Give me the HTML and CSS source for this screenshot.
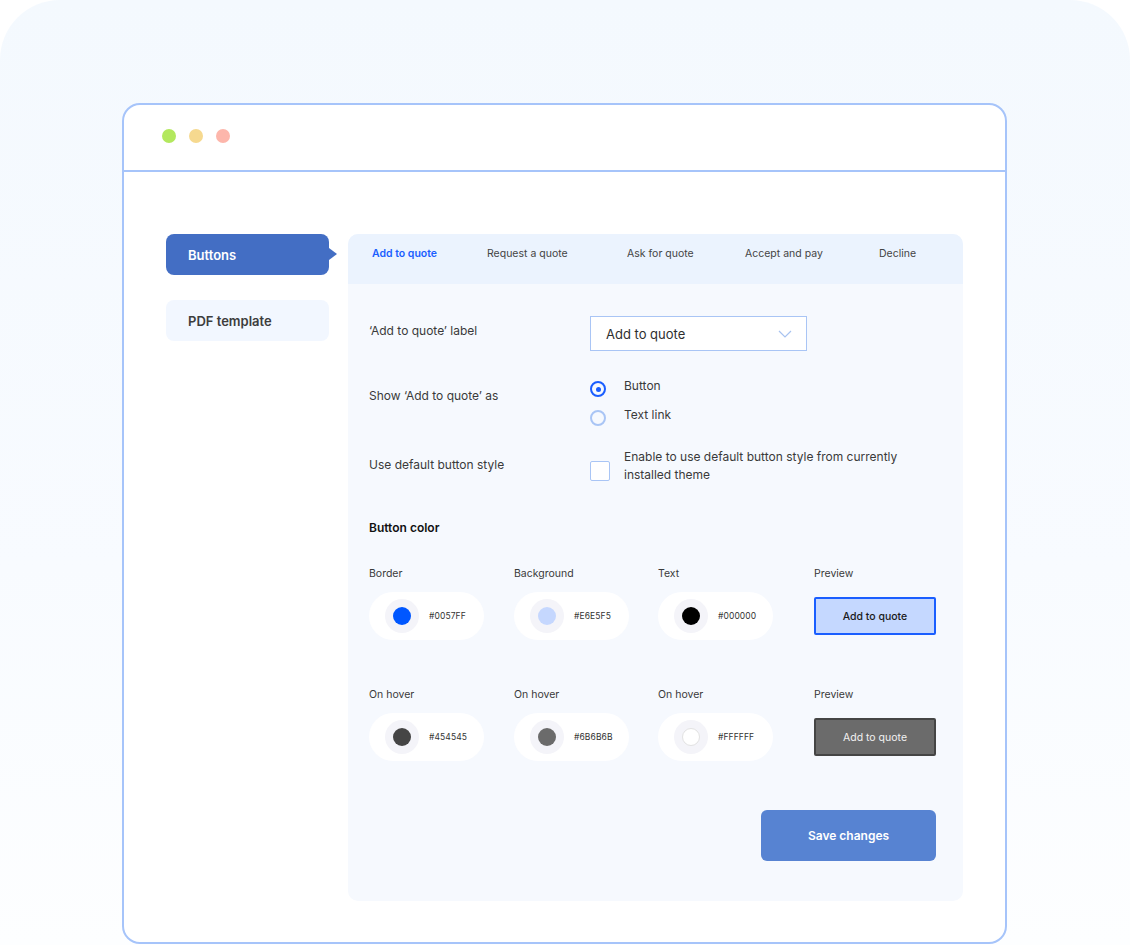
FILE: index.html
```html
<!DOCTYPE html>
<html>
<head>
<meta charset="utf-8">
<link rel="stylesheet" href="styles.css">
</head>
<body>
<div class="stage">
  <div class="window">
    <div class="titlebar">
      <span class="dot dot-green"></span>
      <span class="dot dot-yellow"></span>
      <span class="dot dot-red"></span>
    </div>
    <div class="content">
      <nav class="sidebar">
        <div class="side-item active">Buttons</div>
        <div class="side-item">PDF template</div>
      </nav>
      <section class="panel">
        <div class="tabs">
          <span class="tab active">Add to quote</span>
          <span class="tab">Request a quote</span>
          <span class="tab">Ask for quote</span>
          <span class="tab">Accept and pay</span>
          <span class="tab">Decline</span>
        </div>
        <div class="form">
          <div class="row row-select">
            <div class="label">‘Add to quote’ label</div>
            <div class="select">
              <span>Add to quote</span>
              <svg class="chev" width="14" height="8" viewBox="0 0 14 8"><path d="M1 1l6 6 6-6" fill="none" stroke="#a8c3f0" stroke-width="1.2"/></svg>
            </div>
          </div>
          <div class="row row-radio">
            <div class="label">Show ‘Add to quote’ as</div>
            <div class="radios">
              <div class="radio-opt"><span class="radio checked"></span><span>Button</span></div>
              <div class="radio-opt"><span class="radio"></span><span>Text link</span></div>
            </div>
          </div>
          <div class="row row-check">
            <div class="label">Use default button style</div>
            <div class="check-opt">
              <span class="checkbox"></span>
              <span class="check-text">Enable to use default button style from currently installed theme</span>
            </div>
          </div>
          <h3 class="section-title">Button color</h3>
          <div class="color-grid">
            <div class="col-label">Border</div>
            <div class="col-label">Background</div>
            <div class="col-label">Text</div>
            <div class="col-label">Preview</div>
            <div class="pill"><span class="swatch-wrap"><span class="swatch sw-0057ff"></span></span><span class="hex">#0057FF</span></div>
            <div class="pill"><span class="swatch-wrap"><span class="swatch sw-c5d8ff"></span></span><span class="hex">#E6E5F5</span></div>
            <div class="pill"><span class="swatch-wrap"><span class="swatch sw-000"></span></span><span class="hex">#000000</span></div>
            <div class="preview-cell"><div class="preview preview-normal">Add to quote</div></div>
          </div>
          <div class="color-grid second">
            <div class="col-label">On hover</div>
            <div class="col-label">On hover</div>
            <div class="col-label">On hover</div>
            <div class="col-label">Preview</div>
            <div class="pill"><span class="swatch-wrap"><span class="swatch sw-454545"></span></span><span class="hex">#454545</span></div>
            <div class="pill"><span class="swatch-wrap"><span class="swatch sw-6b6b6b"></span></span><span class="hex">#6B6B6B</span></div>
            <div class="pill"><span class="swatch-wrap"><span class="swatch sw-fff"></span></span><span class="hex">#FFFFFF</span></div>
            <div class="preview-cell"><div class="preview preview-hover">Add to quote</div></div>
          </div>
          <div class="actions">
            <button class="save">Save changes</button>
          </div>
        </div>
      </section>
    </div>
  </div>
</div>
</body>
</html>
```

FILE: styles.css
```css
* { box-sizing: border-box; }
html, body { margin: 0; padding: 0; background: #fff; }
body {
  font-family: Inter, "Noto Sans", "Liberation Sans", sans-serif;
  color: #3a3a3a;
  width: 1130px;
  height: 945px;
  overflow: hidden;
}
.stage {
  width: 1130px;
  height: 945px;
  border-radius: 60px 60px 0 0;
  background: linear-gradient(180deg, #f4f9fe 0%, #f8fbff 60%, #fdfeff 100%);
  padding: 103px 123px 0 122px;
}
.window {
  width: 885px;
  height: 841px;
  border: 2px solid #a6c4fa;
  border-radius: 18px;
  background: #fff;
  overflow: hidden;
}
.titlebar {
  height: 67px;
  border-bottom: 2px solid #a6c4fa;
  display: flex;
  align-items: center;
  gap: 13px;
  padding: 0 0 4px 38px;
}
.dot { width: 14px; height: 14px; border-radius: 50%; display: block; }
.dot-green { background: #b3e85e; }
.dot-yellow { background: #f6d98f; }
.dot-red { background: #fdb6ab; }

.content {
  display: flex;
  padding: 62px 0 0 42px;
  gap: 19px;
}
.sidebar {
  width: 163px;
  display: flex;
  flex-direction: column;
  gap: 25px;
}
.side-item {
  position: relative;
  height: 41px;
  border-radius: 8px;
  background: #f2f7ff;
  color: #3d3d3d;
  font-size: 13px;
  font-weight: 600;
  display: flex;
  align-items: center;
  padding-left: 22px;
}
.side-item.active { background: #436ec4; color: #fff; }
.side-item.active::after {
  content: "";
  position: absolute;
  right: -8px;
  top: 14px;
  border-left: 8px solid #436ec4;
  border-top: 6px solid transparent;
  border-bottom: 6px solid transparent;
}

.panel {
  width: 615px;
  height: 667px;
  background: #f6f9fe;
  border-radius: 10px;
  overflow: hidden;
}
.tabs {
  height: 50px;
  background: #ebf3fe;
  display: grid;
  grid-template-columns: 115px 140px 118px 134px auto;
  padding: 13px 0 0 24px;
  font-size: 10.5px;
  line-height: 14px;
  color: #444;
}
.tab.active { color: #1a5eff; font-weight: 600; }

.form { padding: 0 27px 0 21px; }
.row {
  display: grid;
  grid-template-columns: 221px 1fr;
  align-items: center;
  font-size: 12px;
}
.label { color: #3a3a3a; }
.row-select { margin-top: 32px; }
.row-select .label { margin-top: -7px; }
.select {
  width: 217px;
  height: 35px;
  background: #fff;
  border: 1px solid #a9c5f5;
  display: flex;
  align-items: center;
  justify-content: space-between;
  padding: 0 14px 0 15px;
  font-size: 13px;
  color: #2e2e2e;
}
.row-radio { margin-top: 26px; }
.row-radio .label { margin-top: -12px; }
.radios { display: flex; flex-direction: column; gap: 9px; }
.radio-opt {
  display: grid;
  grid-template-columns: 34px auto;
  line-height: 18px;
  font-size: 12px;
}
.radio {
  width: 16px;
  height: 16px;
  border-radius: 50%;
  border: 2px solid #a9c5f5;
  margin-top: 4px;
  display: flex;
  align-items: center;
  justify-content: center;
}
.radio.checked { border-color: #1a5eff; }
.radio.checked::after {
  content: "";
  width: 5px;
  height: 5px;
  border-radius: 50%;
  background: #1a5eff;
}
.row-check { margin-top: 22px; }
.row-check .label { margin-top: -3px; }
.check-opt {
  display: grid;
  grid-template-columns: 34px 1fr;
  align-items: center;
}
.checkbox {
  width: 20px;
  height: 20px;
  border: 1px solid #a9c5f5;
  border-radius: 2px;
  background: #fff;
  margin-top: 10px;
}
.check-text { line-height: 18px; font-size: 12px; max-width: 300px; }

.section-title {
  margin: 35px 0 0;
  font-size: 12px;
  line-height: 18px;
  font-weight: 600;
  color: #111;
}
.color-grid {
  display: grid;
  grid-template-columns: 145px 144px 156px 122px;
  grid-template-rows: 14px 48px;
  row-gap: 11px;
  margin-top: 30px;
  align-items: center;
}
.color-grid.second { margin-top: 48px; }
.col-label { font-size: 10.5px; line-height: 14px; color: #3a3a3a; }
.pill {
  width: 115px;
  height: 48px;
  border-radius: 24px;
  background: #fff;
  display: flex;
  align-items: center;
  padding-left: 16px;
  gap: 10px;
}
.swatch-wrap {
  width: 34px;
  height: 34px;
  border-radius: 50%;
  background: #f4f4f9;
  display: flex;
  align-items: center;
  justify-content: center;
}
.swatch { width: 18px; height: 18px; border-radius: 50%; display: block; }
.sw-0057ff { background: #0057ff; }
.sw-c5d8ff { background: #c5d7fe; }
.sw-000 { background: #000; }
.sw-454545 { background: #454545; }
.sw-6b6b6b { background: #6b6b6b; }
.sw-fff { background: #fff; border: 1.5px solid #e2e2e2; }
.hex { font-size: 8.5px; color: #333; letter-spacing: 0.1px; }
.preview-cell { display: flex; align-items: center; }
.preview {
  width: 122px;
  height: 38px;
  border-radius: 2px;
  border: 2px solid #1a5eff;
  background: #c5d8ff;
  font-size: 10.5px;
  font-weight: 500;
  color: #1a1a1a;
  display: flex;
  align-items: center;
  justify-content: center;
}
.preview-hover { background: #6b6b6b; border-color: #454545; color: #f2f2f2; font-weight: 400; }

.actions { display: flex; justify-content: flex-end; margin-top: 49px; }
.save {
  width: 175px;
  height: 51px;
  border: none;
  border-radius: 6px;
  background: #5783d2;
  color: #fff;
  font-family: inherit;
  font-size: 12px;
  font-weight: 600;
}
```
